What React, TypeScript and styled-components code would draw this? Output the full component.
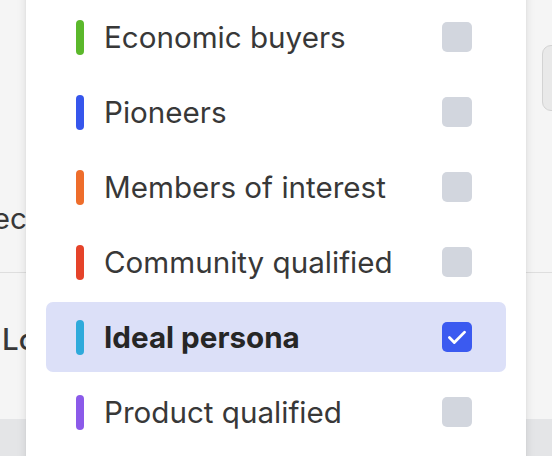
import React, { useState } from "react"
import styled, { createGlobalStyle } from "styled-components"

const GlobalStyle = createGlobalStyle`
  html, body {
    margin: 0;
    padding: 0;
  }
  body {
    font-family: Inter, "Noto Sans", sans-serif;
    background: #f4f4f4;
  }
`

interface Segment {
  name: string
  color: string
}

const segments: Segment[] = [
  { name: "Economic buyers", color: "#5bb82b" },
  { name: "Pioneers", color: "#3656ec" },
  { name: "Members of interest", color: "#ee6d2b" },
  { name: "Community qualified", color: "#e5432a" },
  { name: "Ideal persona", color: "#2faadb" },
  { name: "Product qualified", color: "#8b5ae9" },
]

const Page = styled.div`
  position: relative;
  width: 552px;
  height: 456px;
  overflow: hidden;
  display: flex;
  flex-direction: column;
  background: #f5f5f5;
`

const TopSection = styled.section`
  height: 272px;
  display: grid;
  grid-template-columns: 1fr auto;
  border-bottom: 1px solid #dedede;
`

const FieldCell = styled.div`
  align-self: end;
  width: 27px;
  overflow: hidden;
  display: flex;
  justify-content: flex-end;
  padding-bottom: 36px;
`

const PageText = styled.span<{ $bold?: boolean }>`
  font-size: 29.6px;
  line-height: 36px;
  white-space: nowrap;
  color: #383838;
  font-weight: ${(p) => (p.$bold ? 500 : 400)};
`

const SideButton = styled.button`
  align-self: start;
  margin-top: 45px;
  margin-right: -40px;
  width: 50px;
  height: 66px;
  border: 1.5px solid #d3d3d3;
  border-radius: 9px;
  background: #e9e9e9;
`

const MiddleSection = styled.section`
  height: 146px;
  display: flex;
  align-items: center;
  padding-left: 2px;
  padding-bottom: 14px;
  box-sizing: border-box;
`

const Footer = styled.footer`
  flex: 1;
  background: #e4e5e7;
`

const Menu = styled.div`
  position: absolute;
  left: 26px;
  top: -20px;
  width: 500px;
  height: 520px;
  box-sizing: border-box;
  padding: 22px 20px;
  background: #fff;
  box-shadow: 0 0 10px rgba(0, 0, 0, 0.1), 0 0 2px rgba(0, 0, 0, 0.06);
  display: flex;
  flex-direction: column;
  gap: 5px;
`

const Row = styled.div<{ $active: boolean }>`
  height: 70px;
  flex-shrink: 0;
  display: flex;
  align-items: center;
  padding: 0 34px 0 30px;
  border-radius: 7px;
  background: ${(p) => (p.$active ? "#dce0f8" : "transparent")};
  cursor: pointer;
`

const Bar = styled.span<{ $color: string }>`
  width: 8px;
  height: 35px;
  border-radius: 4px;
  background: ${(p) => p.$color};
  margin-right: 20px;
  flex-shrink: 0;
`

const Label = styled.span<{ $active: boolean }>`
  flex: 1;
  font-size: 29.6px;
  line-height: 36px;
  color: ${(p) => (p.$active ? "#262626" : "#383838")};
  font-weight: ${(p) => (p.$active ? 700 : 400)};
  white-space: nowrap;
`

const Box = styled.span<{ $checked: boolean }>`
  width: 30px;
  height: 30px;
  border-radius: 5px;
  background: ${(p) => (p.$checked ? "#3b5af0" : "#d2d6de")};
  display: flex;
  align-items: center;
  justify-content: center;
  flex-shrink: 0;
`

const App = (): JSX.Element => {
  const [selected, setSelected] = useState("Ideal persona")

  return (
    <>
      <GlobalStyle />
      <Page>
        <TopSection>
          <FieldCell>
            <PageText>Selec</PageText>
          </FieldCell>
          <SideButton />
        </TopSection>
        <MiddleSection>
          <PageText $bold>Location</PageText>
        </MiddleSection>
        <Footer />
        <Menu>
          {segments.map((s) => {
            const active = s.name === selected
            return (
              <Row key={s.name} $active={active} onClick={() => setSelected(s.name)}>
                <Bar $color={s.color} />
                <Label $active={active}>{s.name}</Label>
                <Box $checked={active}>
                  {active && (
                    <svg width="26" height="26" viewBox="0 0 24 24" fill="none">
                      <path
                        d="M5 12.5l4.5 4.5L19 7.5"
                        stroke="#fff"
                        strokeWidth="2.6"
                        strokeLinecap="round"
                        strokeLinejoin="round"
                      />
                    </svg>
                  )}
                </Box>
              </Row>
            )
          })}
        </Menu>
      </Page>
    </>
  )
}

export default App
